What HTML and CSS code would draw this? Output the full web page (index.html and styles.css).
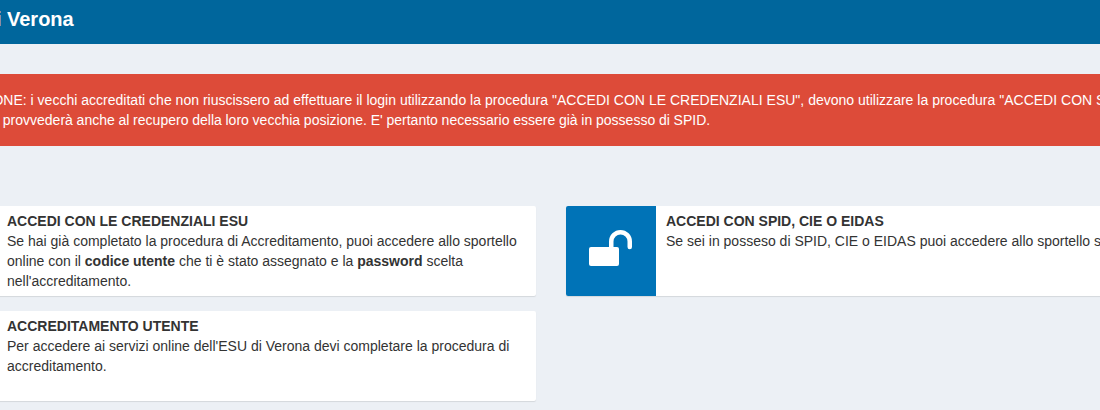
FILE: index.html
```html
<!DOCTYPE html>
<html lang="it">
<head>
<meta charset="utf-8">
<title>ESU di Verona</title>
<link rel="stylesheet" href="styles.css">
</head>
<body>
<div class="page">
  <header class="topbar"><span class="brand">ESU di Verona</span></header>
  <div class="alert"><div class="alert-text">ATTENZIONE: i vecchi accreditati che non riuscissero ad effettuare il login utilizzando la procedura "ACCEDI CON LE CREDENZIALI ESU", devono utilizzare la procedura "ACCEDI CON SPID"<br><span class="alert-second">SPID" che provvederà anche al recupero della loro vecchia posizione. E' pertanto necessario essere già in possesso di SPID.</span></div></div>
  <div class="grid">
    <a class="card">
      <span class="card-icon"></span>
      <div class="card-body">
        <div class="card-title">ACCEDI CON LE CREDENZIALI ESU</div>
        <div>Se hai già completato la procedura di Accreditamento, puoi accedere allo sportello online con il <b>codice utente</b> che ti è stato assegnato e la <b>password</b> scelta nell'accreditamento.</div>
      </div>
    </a>
    <a class="card">
      <span class="card-icon">
        <svg width="46" height="44" viewBox="0 0 46 44"><rect x="1" y="18" width="30" height="19" rx="2" fill="#fff"/><path d="M23.250 18V12.500a9.250 9.250 0 0 1 18.500 0V18" fill="none" stroke="#fff" stroke-width="4.500" stroke-linecap="round"/></svg>
      </span>
      <div class="card-body">
        <div class="card-title">ACCEDI CON SPID, CIE O EIDAS</div>
        <div>Se sei in posseso di SPID, CIE o EIDAS puoi accedere allo sportello studenti.</div>
      </div>
    </a>
    <a class="card">
      <span class="card-icon"></span>
      <div class="card-body">
        <div class="card-title">ACCREDITAMENTO UTENTE</div>
        <div>Per accedere ai servizi online dell'ESU di Verona devi completare la procedura di accreditamento.</div>
      </div>
    </a>
  </div>
</div>
</body>
</html>
```
FILE: styles.css
```css
* { box-sizing: border-box; }
html, body { margin: 0; height: 410px; overflow: hidden; }
body { background: #ecf0f5; font-family: "Liberation Sans", Arial, sans-serif; font-size: 14px; line-height: 20px; color: #333; }
.page { width: 1360px; margin-left: -93px; }
.topbar { height: 44px; background: #00669c; color: #fff; display: flex; align-items: center; padding: 0 0 6px 30px; }
.brand { font-size: 20px; font-weight: 700; }
.alert { margin: 30px 0 0 28px; height: 72px; padding: 16px 0; background: #dd4b39; color: #fff; font-size: 14px; white-space: nowrap; }
.alert-text { letter-spacing: .012px; }
.alert-second { word-spacing: -.2px; }
.grid { display: grid; grid-template-columns: 629px 629px; column-gap: 30px; row-gap: 15px; margin-top: 60px; }
.card { display: flex; height: 90px; background: #fff; border-radius: 2px; box-shadow: 0 1px 1px rgba(0,0,0,.1); }
.card-icon { flex: 0 0 90px; display: flex; align-items: center; justify-content: center; background: #0073b7; border-radius: 2px 0 0 2px; }
.card-body { flex: 1; padding: 5px 10px; }
.card-title { font-weight: 700; }
```
